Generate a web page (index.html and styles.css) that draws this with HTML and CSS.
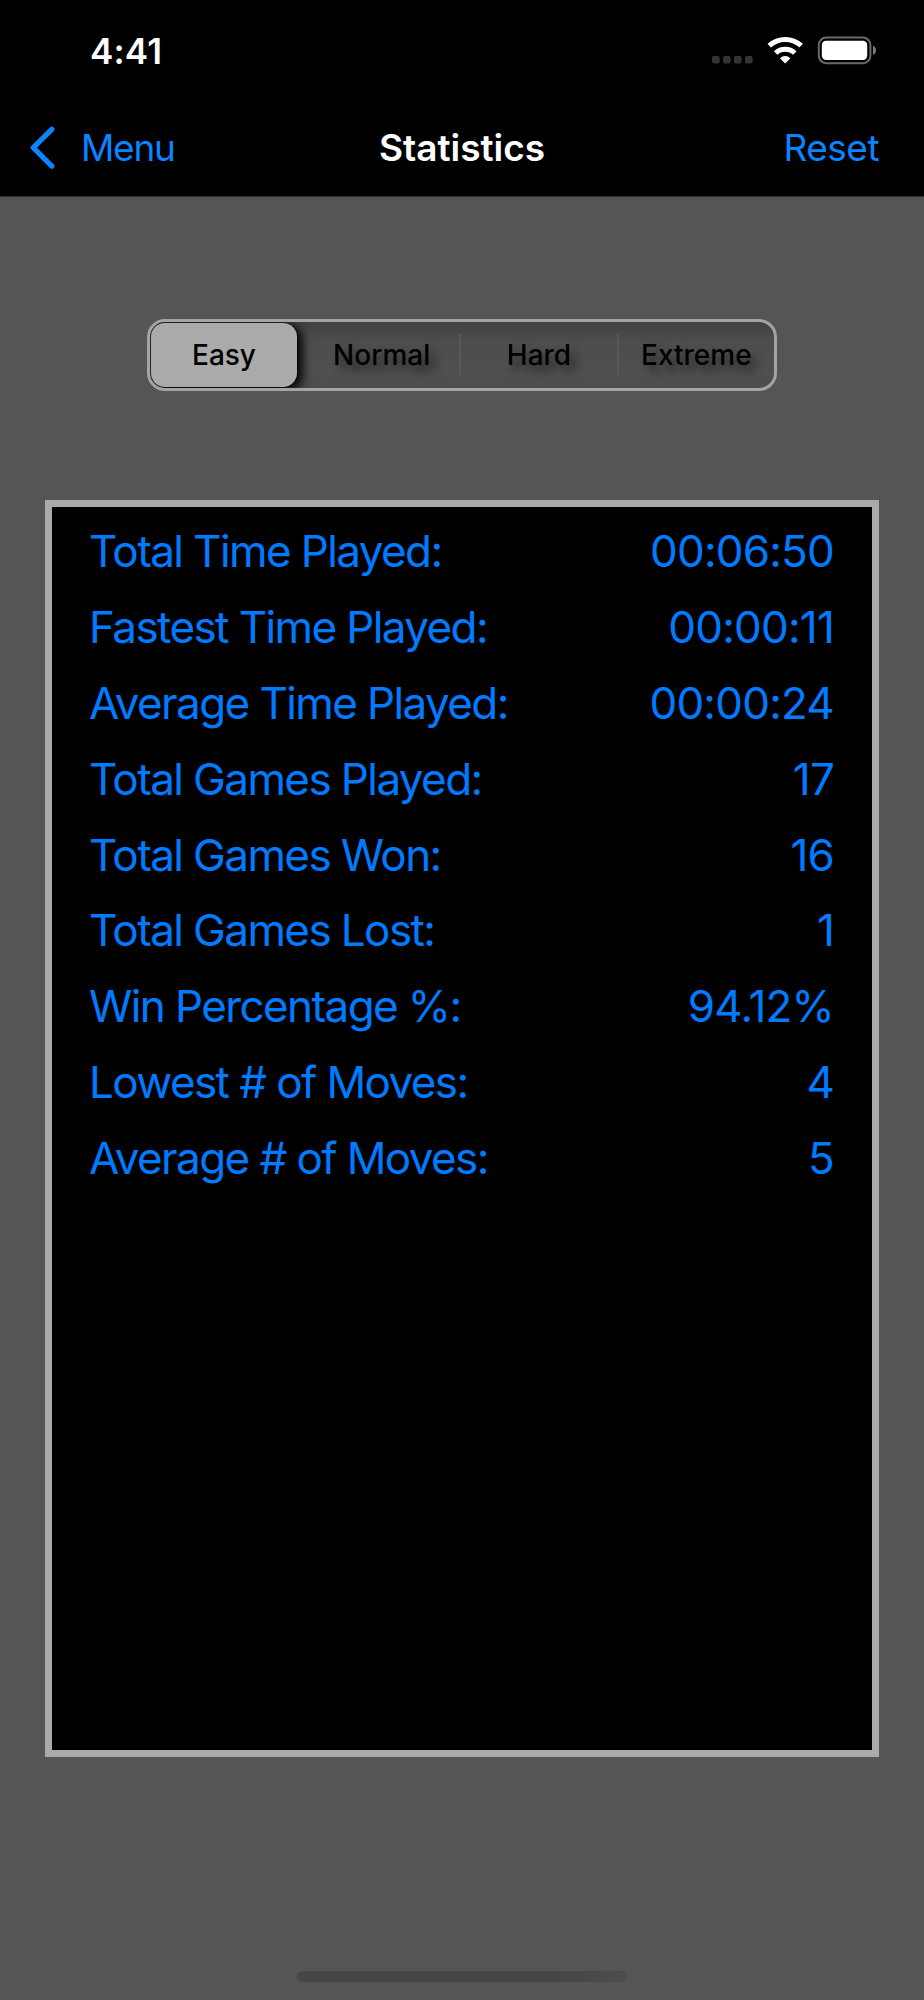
FILE: index.html
```html
<!DOCTYPE html>
<html lang="en">
<head>
<meta charset="utf-8">
<title>Statistics</title>
<link rel="stylesheet" href="styles.css">
</head>
<body>
<div class="screen">
  <header class="top">
    <div class="status">
      <span class="time">4:41</span>
      <svg class="icons" width="166" height="30" viewBox="711 36 166 30">
        <g fill="#343434">
          <rect x="712" y="56" width="7.6" height="7.6" rx="2"/>
          <rect x="723" y="56" width="7.6" height="7.6" rx="2"/>
          <rect x="734" y="56" width="7.6" height="7.6" rx="2"/>
          <rect x="745" y="56" width="7.6" height="7.6" rx="2"/>
        </g>
        <g fill="none" stroke="#fff" stroke-width="5">
          <path d="M769.2 45.7A23.5 23.5 0 0 1 801.2 45.7"/>
          <path d="M775.6 53A14 14 0 0 1 794.8 53"/>
        </g>
        <path d="M785.2 63.4L780 58.2A7.5 7.5 0 0 1 790.4 58.2Z" fill="#fff"/>
        <rect x="818.8" y="37.6" width="51.6" height="25.6" rx="7.5" fill="none" stroke="#6a6a6a" stroke-width="2"/>
        <rect x="821.8" y="40.8" width="45.4" height="19.2" rx="4.2" fill="#fff"/>
        <path d="M873 45.6Q876 47.4 876 50.4T873 55.2Z" fill="#7c7c7c"/>
      </svg>
    </div>
    <nav class="nav">
      <a class="back">
        <svg width="26" height="44" viewBox="0 0 26 44"><path d="M22.8 3.3L4.3 21.7L22.8 40.1" fill="none" stroke="#0a84ff" stroke-width="5.2" stroke-linecap="round" stroke-linejoin="round"/></svg>
        <span>Menu</span>
      </a>
      <h1 class="title">Statistics</h1>
      <a class="reset">Reset</a>
    </nav>
  </header>
  <div class="segments">
    <div class="seg selected"><span>Easy</span></div>
    <div class="seg"><span>Normal</span></div>
    <div class="seg divided"><span>Hard</span></div>
    <div class="seg divided"><span>Extreme</span></div>
  </div>
  <main class="panel">
    <div class="row"><span class="label">Total Time Played:</span><span>00:06:50</span></div>
    <div class="row"><span class="label">Fastest Time Played:</span><span>00:00:11</span></div>
    <div class="row"><span class="label">Average Time Played:</span><span>00:00:24</span></div>
    <div class="row"><span class="label">Total Games Played:</span><span>17</span></div>
    <div class="row"><span class="label">Total Games Won:</span><span>16</span></div>
    <div class="row"><span class="label">Total Games Lost:</span><span>1</span></div>
    <div class="row"><span class="label">Win Percentage %:</span><span>94.12%</span></div>
    <div class="row"><span class="label">Lowest # of Moves:</span><span>4</span></div>
    <div class="row"><span class="label">Average # of Moves:</span><span>5</span></div>
  </main>
  <div class="home"></div>
</div>
</body>
</html>
```
FILE: styles.css
```css
* { box-sizing: border-box; }
body { margin: 0; background: #555; font-family: Inter, "Liberation Sans", sans-serif; }
.screen { width: 924px; height: 2000px; display: flex; flex-direction: column; align-items: center; background: #555; }
.top { width: 100%; height: 197px; background: #000; border-bottom: 1px solid #2c2c2c; }
.status { height: 100px; display: flex; justify-content: space-between; align-items: flex-start; padding: 36px 47px 0 90px; }
.time { color: #fff; font-size: 35px; font-weight: 600; line-height: 30px; letter-spacing: 0.2px; }
.icons { display: block; }
.nav { height: 96px; display: grid; grid-template-columns: 1fr auto 1fr; align-items: center; padding: 0 45px 0 29px; font-size: 37px; line-height: 46px; color: #0a84ff; }
.back { display: flex; align-items: center; gap: 26px; letter-spacing: -1.3px; }
.back svg { display: block; flex: none; }
.title { margin: 0; font-size: 37px; font-weight: 600; line-height: 46px; color: #fff; letter-spacing: 0; transform: translateX(8px); }
.reset { text-align: right; letter-spacing: -0.5px; }
.segments { width: 630px; height: 72px; margin-top: 122px; border: 3px solid #a4a4a4; border-radius: 18px; background: linear-gradient(#424242, #4d4d4d 30%, #505050 80%, #4c4c4c); display: flex; overflow: hidden; padding: 1px 0 1px 1px; }
.seg { flex: 1; display: flex; align-items: center; justify-content: center; font-size: 28px; font-weight: 500; color: #000; text-shadow: 6px 7px 9px rgba(0,0,0,.5); border-left: 2px solid transparent; }
.divided { border-image: linear-gradient(transparent 18%, #585858 18%, #585858 80%, transparent 80%) 1; border-width: 0 0 0 2px; border-style: solid; }
.selected { flex: 0 0 146px; margin-right: 5px; background: #aaa; border: 0; border-radius: 14px; text-shadow: none; box-shadow: 5px 3px 10px 1px rgba(0,0,0,.9), 0 0 2px 1px #222; }
.panel { width: 834px; height: 1257px; margin-top: 109px; border: 7px solid #aaa; background: #000; padding: 6px 38px 0 37px; color: #007aff; font-size: 44px; }
.row { height: 75.9px; display: flex; justify-content: space-between; align-items: center; letter-spacing: -0.8px; }
.label { letter-spacing: -1.6px; }
.home { width: 330px; height: 11px; margin-top: 214px; border-radius: 6px; background: linear-gradient(90deg, #464646 80%, #4d4d4d); }
```
